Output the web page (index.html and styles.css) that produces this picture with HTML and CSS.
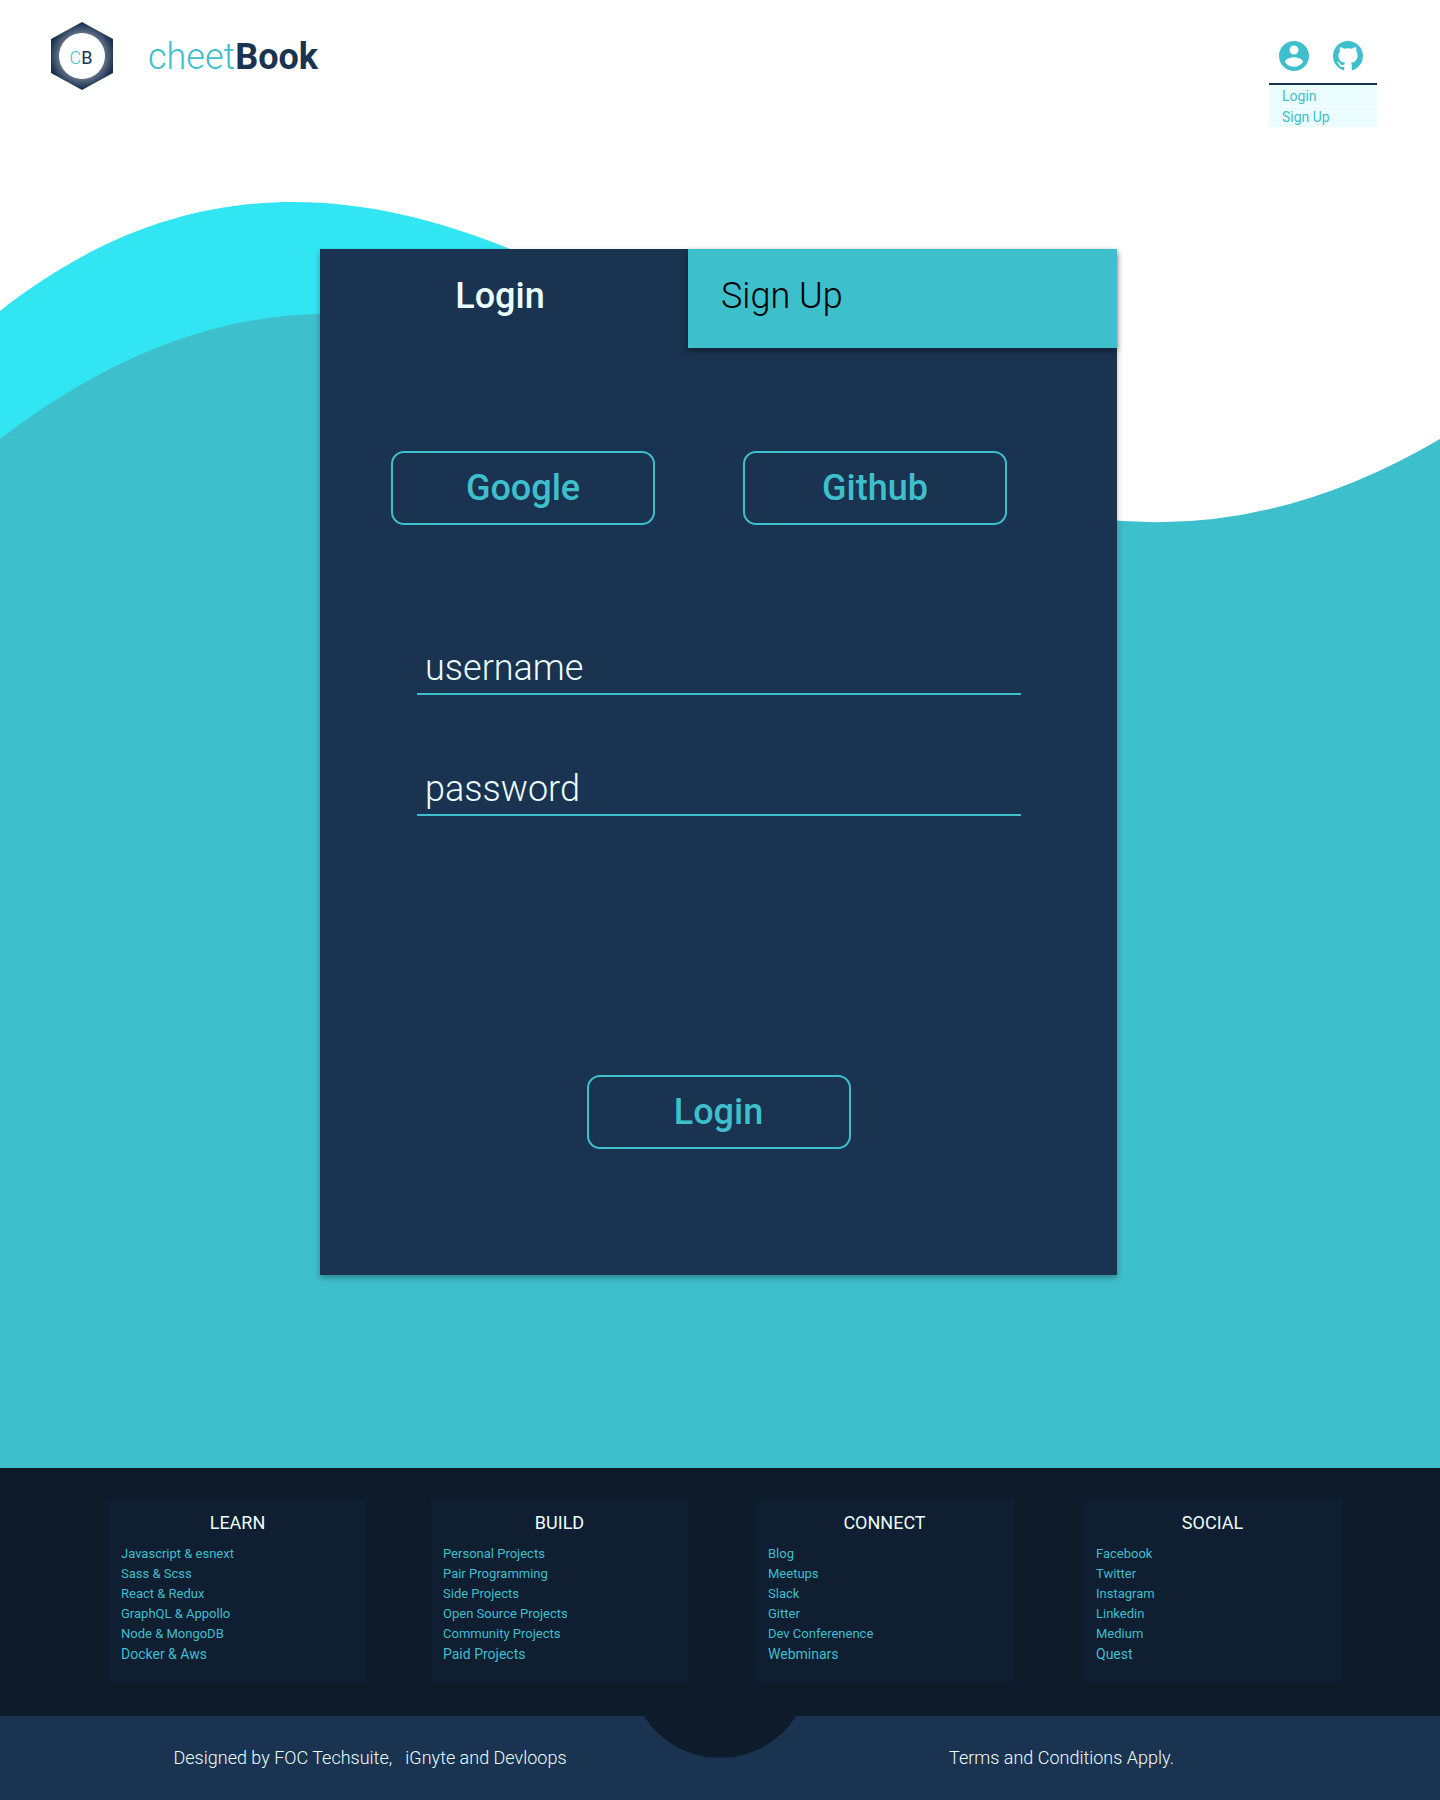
FILE: index.html
```html
<!DOCTYPE html>
<html lang="en">
<head>
<meta charset="utf-8">
<meta name="viewport" content="width=device-width, initial-scale=1">
<title>cheetBook - Login</title>
<link rel="stylesheet" href="styles.css">
</head>
<body>
<div class="page">
  <div class="backdrop" aria-hidden="true">
    <svg class="waves" viewBox="0 0 1440 360" preserveAspectRatio="none">
      <path fill="#32e5f2" d="M0 111C480 -268 960 446 1440 663H0Z"/>
      <path fill="#3ebfcc" d="M0 239Q320 -6 640 229C780 320 950 301 1100 319Q1270 339 1440 239V360H0Z"/>
    </svg>
    <div class="sea"></div>
  </div>

  <header class="header">
    <a class="brand" href="#">
      <svg class="logo" viewBox="0 0 62 68" aria-hidden="true">
        <defs>
          <radialGradient id="glow" gradientUnits="userSpaceOnUse" cx="31" cy="34" r="34">
            <stop offset=".66" stop-color="#66738a"/>
            <stop offset=".95" stop-color="#1a3350"/>
          </radialGradient>
        </defs>
        <path fill="url(#glow)" d="M31 0L62 17V51L31 68L0 51V17Z"/>
        <circle cx="31" cy="34" r="23" fill="#fff"/>
        <text class="logo-text" x="30" y="42" text-anchor="middle"><tspan class="logo-c">C</tspan><tspan class="logo-b">B</tspan></text>
      </svg>
      <span class="brand-name">cheet<b>Book</b></span>
    </a>
    <nav class="account" aria-label="Account">
      <div class="account-icons">
        <a href="#" aria-label="Profile">
          <svg class="icon" viewBox="2 2 20 20"><path d="M12 2C6.480 2 2 6.480 2 12s4.480 10 10 10 10-4.480 10-10S17.520 2 12 2zm0 3c1.660 0 3 1.340 3 3s-1.340 3-3 3-3-1.340-3-3 1.340-3 3-3zm0 14.200c-2.500 0-4.710-1.280-6-3.220.030-1.990 4-3.080 6-3.080 1.990 0 5.970 1.090 6 3.080-1.290 1.940-3.500 3.220-6 3.220z"/></svg>
        </a>
        <a href="#" aria-label="GitHub">
          <svg class="icon" viewBox="0 0 16 16"><path d="M8 0C3.580 0 0 3.580 0 8c0 3.540 2.290 6.530 5.470 7.590.4.070.55-.17.55-.38 0-.19-.01-.82-.01-1.490-2.010.37-2.530-.49-2.690-.94-.09-.23-.48-.94-.82-1.130-.28-.15-.68-.52-.01-.53.63-.01 1.080.58 1.230.82.72 1.210 1.870.87 2.330.66.07-.52.28-.87.51-1.070-1.780-.2-3.640-.89-3.640-3.950 0-.87.31-1.590.82-2.150-.08-.2-.36-1.020.08-2.120 0 0 .67-.21 2.200.82.64-.18 1.320-.27 2-.27s1.360.09 2 .27c1.530-1.040 2.200-.82 2.200-.82.44 1.100.16 1.920.08 2.120.51.56.82 1.270.82 2.150 0 3.070-1.870 3.750-3.650 3.950.29.25.54.73.54 1.480 0 1.070-.01 1.930-.01 2.200 0 .21.15.46.55.38A8.010 8.010 0 0 0 16 8c0-4.420-3.580-8-8-8z"/></svg>
        </a>
      </div>
      <ul class="account-menu">
        <li><a href="#">Login</a></li>
        <li><a href="#">Sign Up</a></li>
      </ul>
    </nav>
  </header>

  <main class="main">
    <section class="card">
      <div class="tabs">
        <button class="tab tab-active" type="button">Login</button>
        <button class="tab tab-other" type="button">Sign Up</button>
      </div>
      <form class="form">
        <div class="providers">
          <button class="button" type="button">Google</button>
          <button class="button" type="button">Github</button>
        </div>
        <div class="fields">
          <input class="field" type="text" placeholder="username" aria-label="username">
          <input class="field" type="password" placeholder="password" aria-label="password">
        </div>
        <button class="button submit" type="submit">Login</button>
      </form>
    </section>
  </main>

  <footer>
    <div class="links">
      <section class="group">
        <h2>LEARN</h2>
        <ul>
          <li><a href="#">Javascript &amp; esnext</a></li>
          <li><a href="#">Sass &amp; Scss</a></li>
          <li><a href="#">React &amp; Redux</a></li>
          <li><a href="#">GraphQL &amp; Appollo</a></li>
          <li><a href="#">Node &amp; MongoDB</a></li>
          <li class="last"><a href="#">Docker &amp; Aws</a></li>
        </ul>
      </section>
      <section class="group">
        <h2>BUILD</h2>
        <ul>
          <li><a href="#">Personal Projects</a></li>
          <li><a href="#">Pair Programming</a></li>
          <li><a href="#">Side Projects</a></li>
          <li><a href="#">Open Source Projects</a></li>
          <li><a href="#">Community Projects</a></li>
          <li class="last"><a href="#">Paid Projects</a></li>
        </ul>
      </section>
      <section class="group">
        <h2>CONNECT</h2>
        <ul>
          <li><a href="#">Blog</a></li>
          <li><a href="#">Meetups</a></li>
          <li><a href="#">Slack</a></li>
          <li><a href="#">Gitter</a></li>
          <li><a href="#">Dev Conferenence</a></li>
          <li class="last"><a href="#">Webminars</a></li>
        </ul>
      </section>
      <section class="group">
        <h2>SOCIAL</h2>
        <ul>
          <li><a href="#">Facebook</a></li>
          <li><a href="#">Twitter</a></li>
          <li><a href="#">Instagram</a></li>
          <li><a href="#">Linkedin</a></li>
          <li><a href="#">Medium</a></li>
          <li class="last"><a href="#">Quest</a></li>
        </ul>
      </section>
    </div>
    <div class="bottom">
      <p class="credit">Designed by FOC Techsuite, &nbsp; iGnyte and Devloops</p>
      <svg class="notch" viewBox="0 0 152 42" aria-hidden="true"><path fill="#0d1b2a" d="M0 0A90 90 0 0 0 152 0Z"/></svg>
      <p class="terms">Terms and Conditions Apply.</p>
    </div>
  </footer>
</div>
</body>
</html>
```
FILE: styles.css
```css
:root {
  --navy: #1a3350;
  --teal: #3ebfcc;
  --ice: #ebfdff;
  --night: #0d1b2a;
}

* {
  box-sizing: border-box;
}

body {
  margin: 0;
  background: #fff;
  font-family: Roboto, "Liberation Sans", sans-serif;
}

a {
  color: inherit;
  text-decoration: none;
}

ul {
  margin: 0;
  padding: 0;
  list-style: none;
}

.page {
  position: relative;
  min-height: 100vh;
  display: flex;
  flex-direction: column;
}

/* Waves painted behind the whole page */
.backdrop {
  position: absolute;
  inset: 0;
  z-index: -1;
  padding-top: 200px;
  display: flex;
  flex-direction: column;
}

.waves {
  display: block;
  width: 100%;
  height: 360px;
}

.sea {
  flex: 1;
  background: var(--teal);
}

.header {
  display: flex;
  justify-content: space-between;
  align-items: flex-start;
  padding: 22px 63px 0 51px;
}

.brand {
  display: flex;
  align-items: center;
  gap: 35px;
}

.logo {
  width: 62px;
  height: 68px;
}

.logo-text {
  font-size: 18px;
}

.logo-c {
  fill: var(--teal);
  font-weight: 300;
}

.logo-b {
  fill: var(--navy);
}

.brand-name {
  padding-top: 2px;
  color: var(--teal);
  font-size: 36px;
  font-weight: 300;
  line-height: 42px;
}

.brand-name b {
  color: var(--navy);
  font-weight: 700;
}

.account {
  width: 108px;
  padding-top: 19px;
}

.account-icons {
  display: flex;
  gap: 24px;
  padding: 0 10px;
}

.icon {
  display: block;
  width: 30px;
  height: 30px;
  fill: var(--teal);
}

.account-menu {
  margin-top: 12px;
  border-top: 2px solid var(--navy);
  display: grid;
  gap: 1px;
  color: var(--teal);
  font-size: 14px;
  line-height: 20px;
}

.account-menu a {
  display: block;
  padding-left: 13px;
  background: var(--ice);
}

.account-menu li:first-child a {
  padding-top: 1px;
}

.main {
  flex: 1;
  display: flex;
  justify-content: center;
  padding: 122px 3px 193px 0;
}

.card {
  width: 797px;
  max-width: 100%;
  background: var(--navy);
  box-shadow: 0 3px 6px rgba(0, 0, 0, .3);
}

.tabs {
  display: grid;
  grid-template-columns: 368fr 429fr;
}

.tab {
  height: 99px;
  border: 0;
  padding: 0 0 6px;
  font: inherit;
  font-size: 36px;
}

.tab-active {
  padding-right: 8px;
  background: none;
  color: var(--ice);
  font-weight: 500;
}

.tab-other {
  padding-left: 33px;
  background: var(--teal);
  color: #000;
  font-weight: 300;
  text-align: left;
  box-shadow: 0 3px 6px rgba(0, 0, 0, .4);
}

.form {
  display: flex;
  flex-direction: column;
  padding: 103px 0 126px;
}

.providers {
  display: flex;
  gap: 88px;
  padding: 0 71px;
}

.button {
  flex-shrink: 0;
  width: 264px;
  height: 74px;
  border: 2px solid var(--teal);
  border-radius: 13px;
  padding: 0;
  background: none;
  color: var(--teal);
  font: inherit;
  font-size: 36px;
  font-weight: 500;
}

.fields {
  display: grid;
  gap: 65px;
  padding: 114px 96px 259px 97px;
}

.field {
  width: 100%;
  height: 56px;
  border: 0;
  border-bottom: 2px solid var(--teal);
  padding: 4px 8px 0;
  background: none;
  color: var(--ice);
  font: inherit;
  font-size: 36px;
  font-weight: 300;
  outline: none;
}

.field::placeholder {
  color: var(--ice);
  opacity: 1;
}

.submit {
  align-self: center;
}

.links {
  display: grid;
  grid-template-columns: 322fr 325fr 328fr 257fr;
  padding: 32px 99px 34px 109px;
  background: var(--night);
}

.group {
  width: 257px;
  padding: 12px 12px 18px;
  background: #0f1e31;
  color: var(--teal);
  font-size: 13px;
  line-height: 20px;
}

.group h2 {
  margin: 0 0 10px;
  color: var(--ice);
  font-size: 18px;
  font-weight: 400;
  line-height: 22px;
  text-align: center;
}

.last {
  font-size: 14px;
}

.bottom {
  display: grid;
  grid-template-columns: 1fr 152px 1fr;
  background: var(--navy);
  color: var(--ice);
  font-size: 18px;
  font-weight: 300;
  line-height: 22px;
}

.bottom p {
  margin: 0;
  text-align: center;
}

.bottom .credit {
  padding: 31px 0 31px 96px;
}

.bottom .terms {
  padding: 31px 113px 31px 0;
}

.notch {
  display: block;
  width: 152px;
  height: 42px;
}
```
